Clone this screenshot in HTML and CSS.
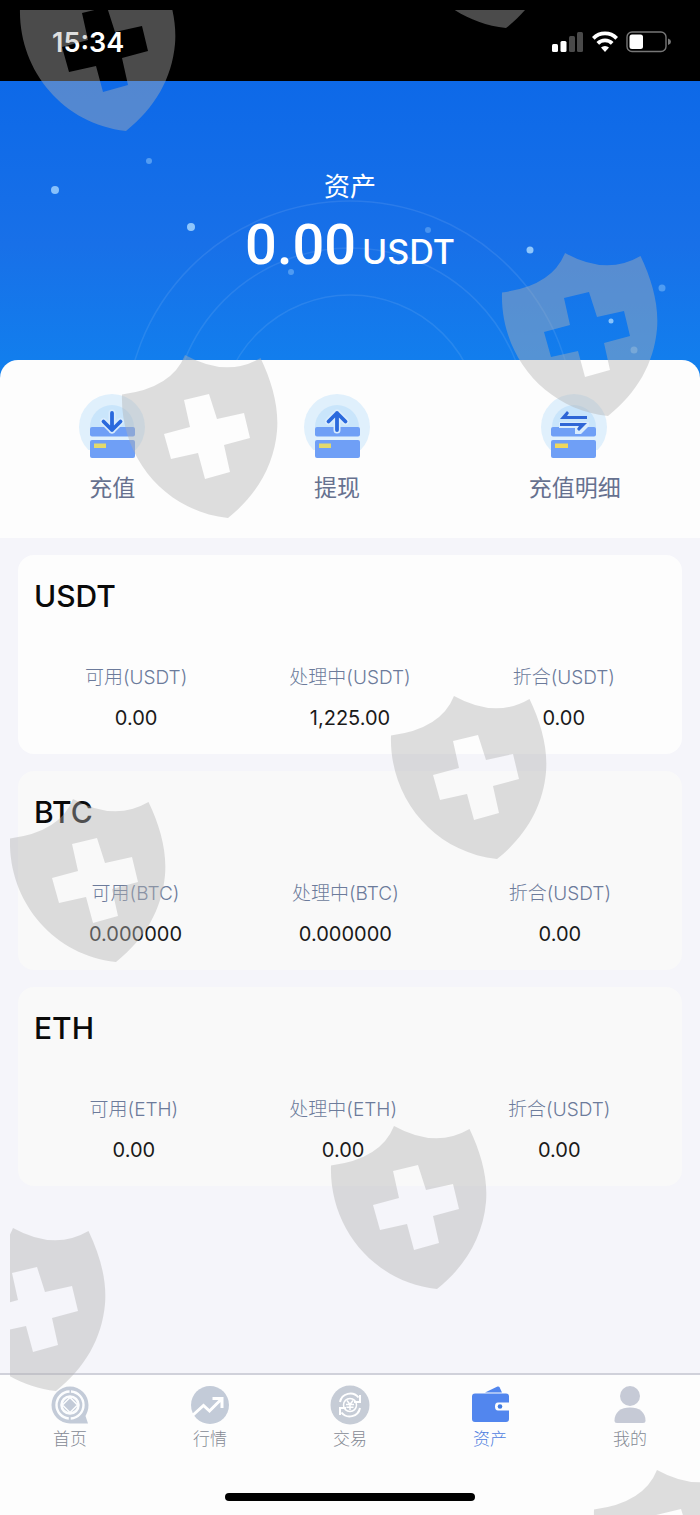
FILE: index.html
```html
<!DOCTYPE html>
<html lang="zh-CN">
<head>
<meta charset="utf-8">
<meta name="viewport" content="width=device-width, initial-scale=1">
<title>资产</title>
<link rel="stylesheet" href="styles.css">
</head>
<body>
<div class="app">
  <header class="status">
    <time class="status-time">15:34</time>
    <div class="status-icons">
      <svg width="32" height="22" viewBox="0 0 32 22" aria-hidden="true">
        <g fill="#fff"><rect x="0" y="13" width="6" height="8" rx="1.5"/><rect x="8.500" y="10" width="6" height="11" rx="1.500"/></g>
        <g fill="#4a4a4a"><rect x="17" y="5" width="6" height="16" rx="1.5"/><rect x="25" y="1" width="6" height="20" rx="1.5"/></g>
      </svg>
      <svg width="26" height="22" viewBox="0 0 26 22" aria-hidden="true">
        <g fill="none" stroke="#fff" stroke-width="3.800"><path d="M1.300 7.300a16.500 16.500 0 0 1 23.400 0"/><path d="M5.800 12.400a10.200 10.200 0 0 1 14.400 0"/></g>
        <path fill="#fff" d="M9 16.600a5.600 5.600 0 0 1 8 0L13 21z"/>
      </svg>
      <svg width="46" height="22" viewBox="0 0 46 22" aria-hidden="true">
        <rect x="1" y="1" width="39" height="19.500" rx="5" fill="none" stroke="#777" stroke-width="1.400"/>
        <rect x="3.500" y="3.500" width="13.500" height="14.500" rx="2.500" fill="#fff"/>
        <path d="M42 7.500q3 1 3 3.200t-3 3.200z" fill="#777"/>
      </svg>
    </div>
  </header>

  <section class="hero">
    <svg class="hero-art" viewBox="0 0 700 297" preserveAspectRatio="xMidYMin slice" aria-hidden="true">
      <g fill="none" stroke="#fff" stroke-opacity=".09" stroke-width="1.500">
        <circle cx="350" cy="345" r="131"/><circle cx="350" cy="345" r="178"/><circle cx="350" cy="345" r="225"/>
      </g>
      <g fill="#a5d6ff">
        <circle cx="55" cy="109" r="4" opacity=".8"/><circle cx="149" cy="80" r="3" opacity=".45"/>
        <circle cx="191" cy="146" r="4" opacity=".85"/><circle cx="428" cy="149" r="3" opacity=".35"/>
        <circle cx="291" cy="191" r="3" opacity=".4"/><circle cx="530" cy="169" r="3.500" opacity=".85"/>
        <circle cx="662" cy="207" r="3.500" opacity=".4"/><circle cx="611" cy="240" r="2.500" opacity=".8"/>
        <circle cx="634" cy="269" r="3.500" opacity=".4"/>
      </g>
    </svg>
    <h1 class="hero-title">资产</h1>
    <p class="hero-amount"><span>0.00</span><span class="hero-unit">USDT</span></p>
  </section>

  <nav class="actions" aria-label="资金操作">
    <a class="action" href="#deposit">
      <svg class="action-icon" width="66" height="66" viewBox="0 0 66 66" aria-hidden="true">
        <circle cx="33" cy="33" r="33" fill="#e0f0fc"/><circle cx="33" cy="33" r="22" fill="#c9e5fb"/>
        <path fill="#fdfdfd" d="M8 56h50v10H8z"/><path fill="#e0f0fc" d="M11 40h45v8H11z"/>
        <rect x="11" y="33" width="45" height="9.500" rx="2" fill="#6f9ff6"/><rect x="11" y="46" width="45" height="18" rx="2" fill="#6f9ff6"/>
        <rect x="15" y="49.500" width="12" height="4.500" fill="#e3d96c"/>
        <g fill="none" stroke-linecap="round" stroke-linejoin="round"><path stroke="#d9ecfd" stroke-width="7" d="M33 19v17M24.500 27.500l8.500 8.500 8.500-8.500"/><path stroke="#2a69dd" stroke-width="3.800" d="M33 19v17M24.500 27.500l8.500 8.500 8.500-8.500"/></g>
      </svg>
      <span>充值</span>
    </a>
    <a class="action" href="#withdraw">
      <svg class="action-icon" width="66" height="66" viewBox="0 0 66 66" aria-hidden="true">
        <circle cx="33" cy="33" r="33" fill="#e0f0fc"/><circle cx="33" cy="33" r="22" fill="#c9e5fb"/>
        <path fill="#fdfdfd" d="M8 56h50v10H8z"/><path fill="#e0f0fc" d="M11 40h45v8H11z"/>
        <rect x="11" y="33" width="45" height="9.500" rx="2" fill="#6f9ff6"/><rect x="11" y="46" width="45" height="18" rx="2" fill="#6f9ff6"/>
        <rect x="15" y="49.500" width="12" height="4.500" fill="#e3d96c"/>
        <g fill="none" stroke-linecap="round" stroke-linejoin="round"><path stroke="#d9ecfd" stroke-width="7" d="M33 36V19M24.500 27.500L33 19l8.500 8.500"/><path stroke="#2a69dd" stroke-width="3.800" d="M33 36V19M24.500 27.500L33 19l8.500 8.500"/></g>
      </svg>
      <span>提现</span>
    </a>
    <a class="action" href="#records">
      <svg class="action-icon" width="66" height="66" viewBox="0 0 66 66" aria-hidden="true">
        <circle cx="32" cy="33" r="33" fill="#e0f0fc"/><circle cx="32" cy="33" r="22" fill="#c9e5fb"/>
        <path fill="#fdfdfd" d="M7 56h50v10H7z"/><path fill="#e0f0fc" d="M9 40h45v8H9z"/>
        <rect x="9" y="33" width="45" height="9.500" rx="2" fill="#6f9ff6"/><rect x="9" y="46" width="45" height="18" rx="2" fill="#6f9ff6"/>
        <rect x="13" y="49.500" width="13" height="4.500" fill="#f0d75c"/>
        <path fill="#d9ecfd" d="M17 28h30v4l-8 8h-6v-6H17z"/>
        <path fill="#2f66d6" d="M18 25l7-8 2 2-2 3h20v3zM45 29l-8 8-2-2 2-3H18v-3z"/>
      </svg>
      <span>充值明细</span>
    </a>
  </nav>

  <main class="wallets">
    <section class="wallet wallet-active">
      <h2 class="wallet-name">USDT</h2>
      <dl class="figures">
        <div class="figure"><dt>可用(USDT)</dt><dd>0.00</dd></div>
        <div class="figure"><dt>处理中(USDT)</dt><dd>1,225.00</dd></div>
        <div class="figure"><dt>折合(USDT)</dt><dd>0.00</dd></div>
      </dl>
    </section>
    <section class="wallet">
      <h2 class="wallet-name">BTC</h2>
      <dl class="figures">
        <div class="figure"><dt>可用(BTC)</dt><dd>0.000000</dd></div>
        <div class="figure"><dt>处理中(BTC)</dt><dd>0.000000</dd></div>
        <div class="figure"><dt>折合(USDT)</dt><dd>0.00</dd></div>
      </dl>
    </section>
    <section class="wallet">
      <h2 class="wallet-name">ETH</h2>
      <dl class="figures">
        <div class="figure"><dt>可用(ETH)</dt><dd>0.00</dd></div>
        <div class="figure"><dt>处理中(ETH)</dt><dd>0.00</dd></div>
        <div class="figure"><dt>折合(USDT)</dt><dd>0.00</dd></div>
      </dl>
    </section>
  </main>

  <footer class="bottom">
    <nav class="tabs" aria-label="主导航">
      <a class="tab" href="#home">
        <svg width="40" height="40" viewBox="0 0 40 40" aria-hidden="true">
          <path fill="#c3cbd8" d="M20 1.500a18.500 18.500 0 0 1 18.500 18.500c0 5-1.500 8-3 11l2.500 7.500H20a18.500 18.500 0 0 1 0-37z"/>
          <g fill="none" stroke="#fcfdfe"><circle cx="20" cy="20" r="13.500" stroke-width="2.400" stroke-dasharray="40.400 2" stroke-dashoffset="-1" transform="rotate(-90 20 20)"/><circle cx="20" cy="20" r="8.500" stroke-width="2.600"/></g>
          <path fill="#c3cbd8" stroke="#fcfdfe" stroke-width="1.500" d="M20 12.500l7.500 7.500-7.500 7.500-7.500-7.500z"/>
        </svg>
        <span>首页</span>
      </a>
      <a class="tab" href="#market">
        <svg width="40" height="40" viewBox="0 0 40 40" aria-hidden="true">
          <circle cx="20" cy="20" r="19" fill="#c3cbd8"/>
          <path fill="none" stroke="#fff" stroke-width="3" d="M3 30l10.500-9.500 6 5.500L31 14.500M22.500 13.500H32v9.500"/>
        </svg>
        <span>行情</span>
      </a>
      <a class="tab" href="#trade">
        <svg width="40" height="40" viewBox="0 0 40 40" aria-hidden="true">
          <circle cx="20" cy="20" r="19.500" fill="#c6ccd6"/>
          <g fill="none" stroke="#fff" stroke-width="2"><path d="M10 17a10.500 10.500 0 0 1 18.500-4.500M30 10v7h-6M30 23a10.500 10.500 0 0 1-18.500 4.500M10 30v-7h6"/><circle cx="20" cy="20" r="6.500" stroke-width="1.500"/><path stroke-width="1.500" d="M17 15.500l3 4 3-4M20 19v6M16 19.500h8M16.500 22.300h7"/></g>
        </svg>
        <span>交易</span>
      </a>
      <a class="tab tab-current" href="#assets" aria-current="page">
        <svg width="40" height="40" viewBox="0 0 40 40" aria-hidden="true">
          <path fill="#5286ee" d="M15 7.500L27.500 1.500q1.500-.5 2.200 1l2.300 5z"/>
          <path fill="#5286ee" d="M5 8.500h31q3 0 3 3v6H28q-3 0-3 4t3 4h11V34q0 3-3 3H5q-3 0-3-3V11.500q0-3 3-3z"/>
          <circle cx="30" cy="21.500" r="2.300" fill="#3f7ae0"/>
        </svg>
        <span>资产</span>
      </a>
      <a class="tab" href="#mine">
        <svg width="40" height="40" viewBox="0 0 40 40" aria-hidden="true">
          <g fill="#c6cad6"><circle cx="20" cy="11" r="10"/><path d="M4.500 35.500C4.500 27 11 22.500 20 22.500s15.500 4.500 15.500 13q0 2.500-2.500 2.500H7q-2.500 0-2.500-2.500z"/></g>
        </svg>
        <span>我的</span>
      </a>
    </nav>
    <div class="home-indicator"></div>
  </footer>

  <svg class="watermark" aria-hidden="true">
    <defs>
      <path id="shield" fill-rule="evenodd" d="M0 39.500Q50 33 63 0Q104.500 23 138.500 3C150 27 157 52 155 76C152 110 135 140 106 163C42 156-2 101 0 39.500zM62 45l6 27-26 7 7 25 27-6 7 26 25-7-6-27 26-7-6-25-27 6-8-25z"/>
    </defs>
    <use href="#shield" x="10" y="-42"/>
    <use href="#shield" x="390" y="-145"/>
    <use href="#shield" x="492" y="243"/>
    <use href="#shield" x="112" y="345"/>
    <use href="#shield" x="381" y="686"/>
    <use href="#shield" x="0" y="789"/>
    <use href="#shield" x="321" y="1116"/>
    <use href="#shield" x="-60" y="1218"/>
    <use href="#shield" x="584" y="1460"/>
  </svg>
</div>
</body>
</html>
```
FILE: styles.css
```css
* {
  box-sizing: border-box;
}

body,
h1,
h2,
p,
dl,
dd {
  margin: 0;
}

body {
  font-family: Inter, "Noto Sans CJK SC", sans-serif;
  background: #f5f5fa;
}

a {
  color: inherit;
  text-decoration: none;
}

.app {
  position: relative;
  display: flex;
  flex-direction: column;
  min-height: 100vh;
  overflow: hidden;
}

.status {
  display: flex;
  justify-content: space-between;
  align-items: center;
  height: 81px;
  padding: 3px 28px 0 52px;
  background: #000;
}

.status-time {
  color: #fff;
  font-size: 27px;
  font-weight: 600;
}

.status-icons {
  display: flex;
  gap: 8px;
}

.hero {
  position: relative;
  height: 297px;
  padding-top: 88px;
  background: linear-gradient(#0d69e8, #1870e8 55%, #1180ee);
  color: #fff;
  text-align: center;
}

.hero-art {
  position: absolute;
  inset: 0;
  width: 100%;
  height: 100%;
}

.hero-title {
  position: relative;
  font-size: 26px;
  font-weight: 400;
  line-height: 36px;
}

.hero-amount {
  position: relative;
  display: flex;
  justify-content: center;
  align-items: baseline;
  gap: 6px;
  font-family: Roboto, sans-serif;
  font-size: 56px;
  font-weight: 500;
  line-height: 80px;
}

.hero-unit {
  font-family: Inter, sans-serif;
  font-size: 34px;
}

.actions {
  position: relative;
  display: flex;
  justify-content: space-around;
  margin-top: -18px;
  padding: 34px 0 32px;
  border-radius: 18px 18px 0 0;
  background: #fdfdfd;
}

.action {
  display: flex;
  flex-direction: column;
  align-items: center;
  gap: 10px;
  color: #66718f;
  font-size: 23px;
  font-weight: 400;
  line-height: 36px;
}

.action-icon {
  overflow: visible;
}

.wallets {
  display: flex;
  flex-direction: column;
  gap: 17px;
  padding: 17px 18px;
}

.wallet {
  padding: 19px 16px 16px;
  border-radius: 16px;
  background: #f9f9f9;
}

.wallet-active {
  background: #fdfdfd;
}

.wallet-name {
  color: #0a0a0a;
  font-size: 30px;
  font-weight: 500;
  line-height: 44px;
}

.figures {
  display: flex;
  justify-content: space-around;
  padding-top: 40px;
  text-align: center;
}

.figure {
  line-height: 40px;
}

.figure dt {
  color: #6c7b9b;
  font-size: 19px;
  font-weight: 300;
}

.figure dd {
  color: #1a1a1a;
  font-size: 20px;
}

.bottom {
  display: flex;
  flex-direction: column;
  align-items: center;
  gap: 42px;
  margin-top: auto;
  padding: 10px 0 14px;
  border-top: 2px solid #d0d1da;
  background: #fdfdfd;
}

.tabs {
  display: flex;
  width: 100%;
}

.tab {
  display: flex;
  flex: 1;
  flex-direction: column;
  align-items: center;
  gap: 2px;
  color: #858a94;
  font-size: 17px;
  font-weight: 300;
  line-height: 24px;
}

.tab-current {
  color: #4f80e0;
}

.home-indicator {
  width: 250px;
  height: 8px;
  border-radius: 4px;
  background: #000;
}

.watermark {
  position: absolute;
  top: 10px;
  left: 10px;
  width: calc(100% - 10px);
  height: calc(100% - 10px);
  overflow: hidden;
  fill: #b2b2b2;
  opacity: 0.42;
  pointer-events: none;
}
```
